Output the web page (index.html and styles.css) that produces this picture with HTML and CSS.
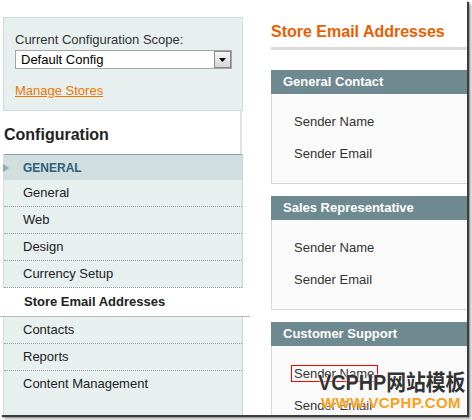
FILE: index.html
```html
<!DOCTYPE html>
<html>
<head>
<meta charset="utf-8">
<link rel="stylesheet" href="styles.css">
</head>
<body>
<div class="frame">
  <aside class="side">
    <div class="scope">
      <div class="scope-label">Current Configuration Scope:</div>
      <div class="select">
        <span>Default Config</span>
        <span class="sel-btn"><svg width="7" height="4" viewBox="0 0 7 4"><path d="M0 0H7L3.5 4Z" fill="#000"/></svg></span>
      </div>
      <a class="manage">Manage Stores</a>
    </div>
    <h3 class="conf">Configuration</h3>
    <div class="nav">
      <div class="nav-head"><span class="tri"></span><span class="nav-title">GENERAL</span></div>
      <ul class="nav-list">
        <li class="item">General</li>
        <li class="item">Web</li>
        <li class="item">Design</li>
        <li class="item">Currency Setup</li>
        <li class="item active">Store Email Addresses</li>
        <li class="item">Contacts</li>
        <li class="item">Reports</li>
        <li class="item last">Content Management</li>
      </ul>
    </div>
  </aside>
  <main class="main">
    <h2 class="title">Store Email Addresses</h2>
    <section class="fs">
      <div class="fs-head">General Contact</div>
      <div class="fs-body"><div class="row">Sender Name</div><div class="row">Sender Email</div></div>
    </section>
    <section class="fs">
      <div class="fs-head">Sales Representative</div>
      <div class="fs-body"><div class="row">Sender Name</div><div class="row">Sender Email</div></div>
    </section>
    <section class="fs">
      <div class="fs-head">Customer Support</div>
      <div class="fs-body"><div class="row"><span class="marked">Sender Name</span></div><div class="row">Sender Email</div></div>
    </section>
  </main>
  <div class="wm">
    <div class="wm1">VCPHP网站模板</div>
    <div class="wm2">WWW.VCPHP.COM</div>
  </div>
</div>
</body>
</html>
```
FILE: styles.css
```css
* { box-sizing: border-box; margin: 0; padding: 0; }
html, body { background: #fff; }
body {
  font-family: "Liberation Sans", Arial, sans-serif;
  font-size: 13px;
  color: #222;
  width: 472px;
  height: 420px;
  overflow: hidden;
}
.frame {
  position: relative;
  width: 467px;
  height: 415px;
  background: #fff;
  display: flex;
  overflow: hidden;
  box-shadow: 2px 2px 1px #3c3c3c, 4px 4px 3px rgba(0,0,0,.35);
}
.side {
  width: 240px;
  flex: none;
  margin-left: 3px;
  padding-top: 17px;
  display: flex;
  flex-direction: column;
}
.scope {
  height: 94px;
  border: 1px solid #cddddd;
  background: #e7efef;
  padding: 14px 0 0 11px;
}
.scope-label { line-height: 15px; color: #333; }
.select {
  margin-top: 3px;
  width: 217px;
  height: 19px;
  border: 1px solid #a5a5a5;
  background: #fff;
  display: flex;
  align-items: center;
  justify-content: space-between;
  padding-left: 5px;
  color: #000;
}
.sel-btn {
  width: 17px;
  height: 17px;
  border: 1px solid #8a8a8a;
  background: linear-gradient(#f6f6f6, #d6d6d6);
  display: flex;
  align-items: center;
  justify-content: center;
}
.manage {
  display: block;
  width: max-content;
  margin-top: 14px;
  line-height: 15px;
  color: #ea7601;
  text-decoration: underline;
}
.conf {
  margin-left: -3px;
  width: 242px;
  height: 43px;
  background: #fff;
  border-right: 2px solid #e2e2e2;
  font-size: 16px;
  font-weight: bold;
  line-height: 19px;
  padding: 14px 0 0 4px;
  color: #222;
}
.nav {
  flex: 1;
  background: #e7efef;
  border-left: 1px solid #d4e0e0;
  border-right: 1px solid #c8d5d6;
}
.nav-head {
  height: 26px;
  border-top: 1px solid #8da2aa;
  background: #d0dedf;
  display: flex;
  align-items: center;
}
.tri {
  margin-left: -1px;
  border-left: 6px solid #8fa9b1;
  border-top: 4px solid transparent;
  border-bottom: 4px solid transparent;
}
.nav-title {
  margin-left: 14px;
  font-size: 12px;
  font-weight: bold;
  color: #2e5e78;
}
.nav-list { list-style: none; }
.item {
  height: 27px;
  line-height: 26px;
  border-bottom: 1px dotted #999;
  padding-left: 19px;
}
.item.last { border-bottom: 0; }
.item.active {
  background: #fff;
  font-weight: bold;
  height: 29px;
  line-height: 28px;
  border-bottom: 1px solid #bbb;
  margin: 0 -8px 0 -4px;
  padding-left: 24px;
}
.main {
  margin-left: 28px;
  width: 220px;
  flex: none;
  padding-top: 22px;
}
.title {
  font-size: 16px;
  line-height: 19px;
  color: #eb5e00;
  padding-bottom: 6px;
  border-bottom: 3px solid #dcdcdc;
  margin-bottom: 20px;
}
.fs-head {
  height: 24px;
  line-height: 24px;
  background: #6f8991;
  color: #fff;
  font-weight: bold;
  padding-left: 12px;
}
.fs-body {
  background: #fafafa;
  border: 1px solid #d6d6d6;
  border-top: 0;
  padding: 20px 0 21px 22px;
  display: flex;
  flex-direction: column;
  gap: 16px;
  margin-bottom: 12px;
  color: #333;
}
.row { line-height: 16px; }
.marked {
  display: inline-block;
  border: 1px solid #ff0000;
  line-height: 15px;
  padding: 0 3px 0 2px;
  margin: -1px 0 0 -3px;
}
.wm {
  position: absolute;
  left: 318px;
  top: 371px;
}
.wm1 {
  font: bold 22px/24px "Liberation Sans", "Noto Sans CJK SC", sans-serif;
  color: #333;
  white-space: nowrap;
  transform: scaleX(.9);
  transform-origin: left center;
  text-shadow: 0 0 2px #fff, 0 0 2px #fff;
}
.wm2 {
  font: bold 15px/16px "Liberation Sans", sans-serif;
  letter-spacing: .4px;
  color: #f8a11c;
  white-space: nowrap;
  margin-left: 3px;
  text-shadow: 0 0 2px #fff;
}
```
